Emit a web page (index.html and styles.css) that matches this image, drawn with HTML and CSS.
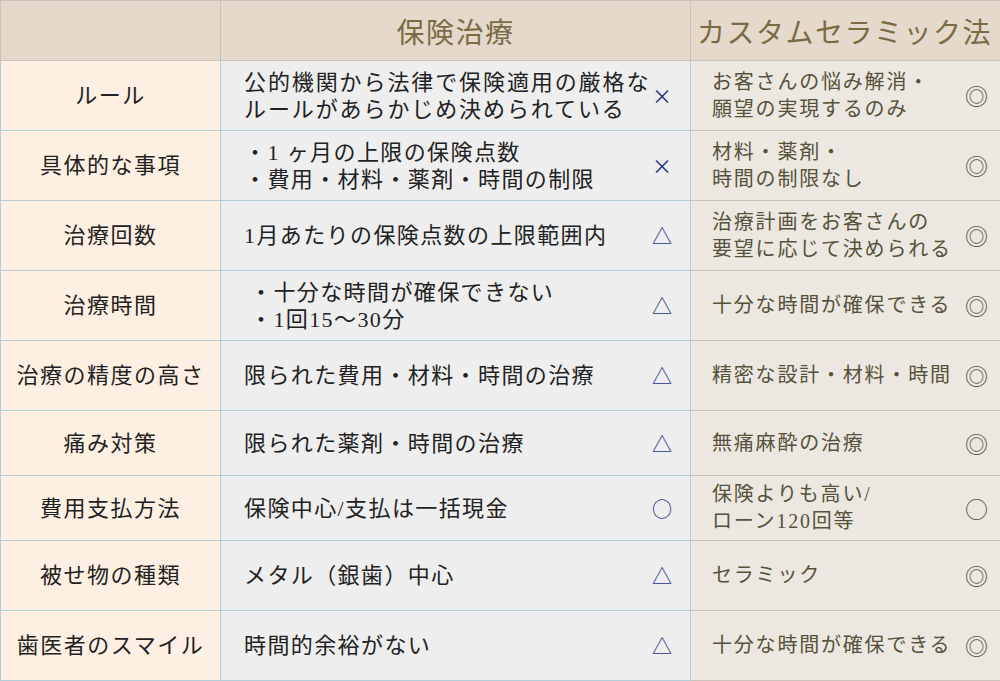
FILE: index.html
```html
<!DOCTYPE html>
<html lang="ja">
<head>
<meta charset="utf-8">
<link rel="stylesheet" href="styles.css">
</head>
<body>
<table class="cmp">
  <thead>
    <tr class="head">
      <th class="c1"></th>
      <th class="c2">保険治療</th>
      <th class="c3">カスタムセラミック法</th>
    </tr>
  </thead>
  <tbody>
    <tr class="r70">
      <th class="c1">ルール</th>
      <td class="c2"><div class="cell"><span class="txt wide">公的機関から法律で保険適用の厳格な<br>ルールがあらかじめ決められている</span><span class="mk">×</span></div></td>
      <td class="c3"><div class="cell"><span class="txt">お客さんの悩み解消・<br>願望の実現するのみ</span><span class="mk">◎</span></div></td>
    </tr>
    <tr class="r70">
      <th class="c1">具体的な事項</th>
      <td class="c2"><div class="cell"><span class="txt">・1 ヶ月の上限の保険点数<br>・費用・材料・薬剤・時間の制限</span><span class="mk">×</span></div></td>
      <td class="c3"><div class="cell"><span class="txt">材料・薬剤・<br>時間の制限なし</span><span class="mk">◎</span></div></td>
    </tr>
    <tr class="r70">
      <th class="c1">治療回数</th>
      <td class="c2"><div class="cell"><span class="txt">1月あたりの保険点数の上限範囲内</span><span class="mk">△</span></div></td>
      <td class="c3"><div class="cell"><span class="txt">治療計画をお客さんの<br>要望に応じて決められる</span><span class="mk">◎</span></div></td>
    </tr>
    <tr class="r70">
      <th class="c1">治療時間</th>
      <td class="c2"><div class="cell"><span class="txt bul">・十分な時間が確保できない<br>・1回15～30分</span><span class="mk">△</span></div></td>
      <td class="c3"><div class="cell"><span class="txt">十分な時間が確保できる</span><span class="mk">◎</span></div></td>
    </tr>
    <tr class="r70">
      <th class="c1">治療の精度の高さ</th>
      <td class="c2"><div class="cell"><span class="txt">限られた費用・材料・時間の治療</span><span class="mk">△</span></div></td>
      <td class="c3"><div class="cell"><span class="txt">精密な設計・材料・時間</span><span class="mk">◎</span></div></td>
    </tr>
    <tr class="r65">
      <th class="c1">痛み対策</th>
      <td class="c2"><div class="cell"><span class="txt">限られた薬剤・時間の治療</span><span class="mk">△</span></div></td>
      <td class="c3"><div class="cell"><span class="txt">無痛麻酔の治療</span><span class="mk">◎</span></div></td>
    </tr>
    <tr class="r65">
      <th class="c1">費用支払方法</th>
      <td class="c2"><div class="cell"><span class="txt">保険中心/支払は一括現金</span><span class="mk">○</span></div></td>
      <td class="c3"><div class="cell"><span class="txt">保険よりも高い/<br>ローン120回等</span><span class="mk">○</span></div></td>
    </tr>
    <tr class="r70">
      <th class="c1">被せ物の種類</th>
      <td class="c2"><div class="cell"><span class="txt">メタル（銀歯）中心</span><span class="mk">△</span></div></td>
      <td class="c3"><div class="cell"><span class="txt">セラミック</span><span class="mk">◎</span></div></td>
    </tr>
    <tr class="r70">
      <th class="c1">歯医者のスマイル</th>
      <td class="c2"><div class="cell"><span class="txt">時間的余裕がない</span><span class="mk">△</span></div></td>
      <td class="c3"><div class="cell"><span class="txt">十分な時間が確保できる</span><span class="mk">◎</span></div></td>
    </tr>
  </tbody>
</table>
</body>
</html>
```

FILE: styles.css
```css
html, body {
  margin: 0;
  padding: 0;
  background: #ffffff;
}

body {
  font-family: "Liberation Serif", "Noto Sans CJK JP", serif;
  color: #222222;
}

.cmp {
  border-collapse: collapse;
  table-layout: fixed;
  width: 1000px;
}

.cmp th, .cmp td {
  padding: 0;
  border: 1px solid #b3cdd9;
  font-weight: 400;
  overflow: hidden;
}

.head th {
  height: 59px;
  background: #e5d9cc;
  border-color: #c9c3bc;
  color: #7a6b45;
  font-size: 28px;
  letter-spacing: 1.5px;
  text-align: center;
}

.head .c3 {
  text-align: left;
  padding-left: 6px;
  letter-spacing: 1.5px;
}

.c1 { width: 219px; }
.c2 { width: 469px; }
.c3 { width: 310px; }

tbody .c1 {
  background: #fdf0e3;
  font-size: 22px;
  letter-spacing: 1.5px;
  text-align: center;
  line-height: 27px;
}

tbody .c2 {
  background: #eeeeee;
  font-size: 22px;
  letter-spacing: 1.4px;
}

tbody .c3 {
  background: #ece7e1;
  border-color: #c9c3bc;
  border-left-color: #b3cdd9;
  color: #55523a;
  font-size: 20px;
  letter-spacing: 1.8px;
}

.r70 th, .r70 td { height: 69px; }
.r65 th, .r65 td { height: 64px; }

.cell {
  display: flex;
  align-items: center;
  justify-content: space-between;
}

.c2 .cell { padding: 0 18px 0 23px; }
.c3 .cell { padding: 0 14px 0 21px; }

.txt {
  line-height: 27px;
  white-space: nowrap;
}

.txt.wide {
  letter-spacing: 1.9px;
}

.txt.bul {
  padding-left: 6px;
}

.mk {
  font-family: "Noto Sans CJK JP", sans-serif;
  letter-spacing: 0;
  line-height: 27px;
}

.c2 .mk {
  color: #23347a;
  font-size: 20px;
}

.c3 .mk {
  color: #5c5942;
  font-size: 23px;
  margin-right: 5px;
}
```
